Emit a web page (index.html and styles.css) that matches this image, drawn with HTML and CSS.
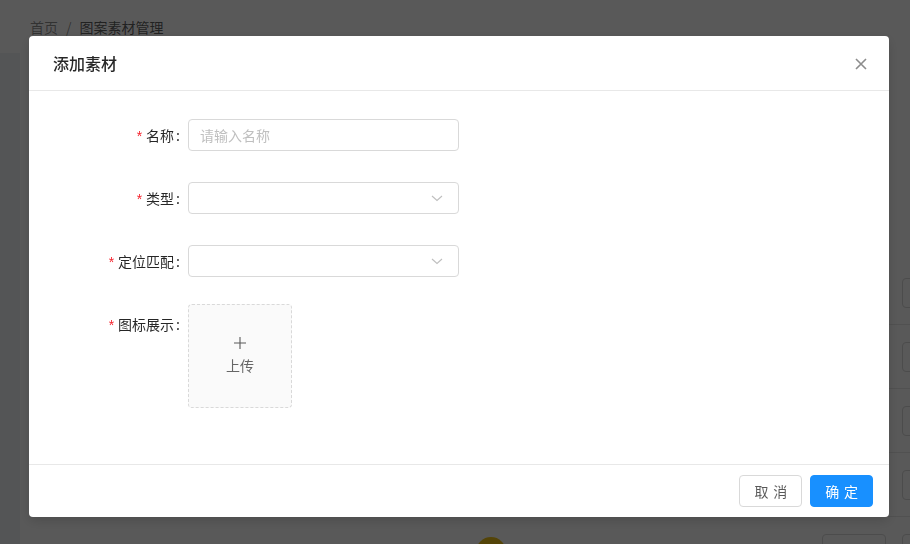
FILE: index.html
```html
<html>
<head>
  <meta charset="utf-8">
  <link rel="stylesheet" href="styles.css">
</head>
<body>
  <div class="page">
    <div class="page-header">
      <span class="crumb">首页</span>
      <span class="crumb-sep">/</span>
      <span class="crumb crumb-last">图案素材管理</span>
    </div>
    <div class="page-content">
      <div class="card">
        <div class="table-row"><span></span><span></span><span></span><span class="actions"><i class="btn-ghost"></i><i class="btn-ghost"></i></span></div>
        <div class="table-row"><span></span><span></span><span></span><span class="actions"><i class="btn-ghost"></i><i class="btn-ghost"></i></span></div>
        <div class="table-row"><span></span><span></span><span></span><span class="actions"><i class="btn-ghost"></i><i class="btn-ghost"></i></span></div>
        <div class="table-row"><span></span><span></span><span></span><span class="actions"><i class="btn-ghost"></i><i class="btn-ghost"></i></span></div>
        <div class="table-row"><span></span><span class="thumb"></span><span></span><span class="actions"><i class="btn-ghost"></i><i class="btn-ghost"></i></span></div>
      </div>
    </div>
  </div>

  <div class="modal-mask"></div>

  <div class="modal">
    <div class="modal-header">
      <div class="modal-title">添加素材</div>
      <button class="modal-close" type="button">
        <svg width="12" height="12" viewBox="0 0 12 12">
          <path d="M1 1 L11 11 M11 1 L1 11" stroke="#8c8c8c" stroke-width="1.6" fill="none"/>
        </svg>
      </button>
    </div>

    <div class="modal-body">
      <form class="form">
        <div class="form-item">
          <label class="form-label"><span class="req">*</span>名称</label>
          <div class="form-control">
            <input class="input" type="text" placeholder="请输入名称">
          </div>
        </div>
        <div class="form-item">
          <label class="form-label"><span class="req">*</span>类型</label>
          <div class="form-control">
            <div class="select">
              <svg class="select-arrow" width="12" height="12" viewBox="0 0 12 12">
                <path d="M1 4 L6 8.5 L11 4" stroke="#bfbfbf" stroke-width="1.1" fill="none"/>
              </svg>
            </div>
          </div>
        </div>
        <div class="form-item">
          <label class="form-label"><span class="req">*</span>定位匹配</label>
          <div class="form-control">
            <div class="select">
              <svg class="select-arrow" width="12" height="12" viewBox="0 0 12 12">
                <path d="M1 4 L6 8.5 L11 4" stroke="#bfbfbf" stroke-width="1.1" fill="none"/>
              </svg>
            </div>
          </div>
        </div>
        <div class="form-item form-item-upload">
          <label class="form-label"><span class="req">*</span>图标展示</label>
          <div class="form-control">
            <div class="upload">
              <svg width="14" height="14" viewBox="0 0 14 14">
                <path d="M7 1 V13 M1 7 H13" stroke="#595959" stroke-width="1.1" fill="none"/>
              </svg>
              <div class="upload-text">上传</div>
            </div>
          </div>
        </div>
      </form>
    </div>

    <div class="modal-footer">
      <button class="btn" type="button"><span>取消</span></button>
      <button class="btn btn-primary" type="button"><span>确定</span></button>
    </div>
  </div>
</body>
</html>
```

FILE: styles.css
```css
html, body {
  height: 100%;
}
body {
  margin: 0;
  padding: 0;
  overflow: hidden;
  font-family: "Noto Sans CJK SC", "Noto Sans", sans-serif;
  font-size: 14px;
  color: rgba(0,0,0,.65);
  background: #f0f2f5;
}

/* page behind the dialog */
.page {
  width: 100%;
  height: 100%;
  overflow: hidden;
}

.page-header {
  height: 53px;
  padding-left: 30px;
  display: flex;
  align-items: center;
  background: #fff;
  box-sizing: border-box;
}

.crumb {
  color: rgba(0,0,0,.45);
}
.crumb-last {
  color: rgba(0,0,0,.65);
}
.crumb-sep {
  margin: 0 8px;
  color: rgba(0,0,0,.45);
}

.page-content {
  padding-left: 20px;
}

.card {
  width: 990px;
  background: #fff;
  padding: 208px 0 0 24px;
}

.table-row {
  display: grid;
  grid-template-columns: 432px 30px 316px auto;
  align-items: center;
  height: 63px;
  border-bottom: 1px solid #e8e8e8;
}

.thumb {
  width: 30px;
  height: 30px;
  border-radius: 50%;
  background: #f0c419;
  margin-top: 6px;
}

.actions {
  display: flex;
  gap: 16px;
}

.btn-ghost {
  display: block;
  width: 64px;
  height: 30px;
  border: 1px solid #d9d9d9;
  border-radius: 4px;
  box-sizing: border-box;
}

/* dialog */
.modal-mask {
  position: fixed;
  top: 0;
  left: 0;
  right: 0;
  bottom: 0;
  background: rgba(0,0,0,.65);
}

.modal {
  position: fixed;
  top: 36px;
  left: 29px;
  width: 860px;
  background: #fff;
  border-radius: 4px;
  box-shadow: 0 4px 12px rgba(0,0,0,.15);
}

.modal-header {
  position: relative;
  padding: 16px 24px;
  border-bottom: 1px solid #e8e8e8;
}

.modal-title {
  font-size: 16px;
  line-height: 22px;
  font-weight: 500;
  color: rgba(0,0,0,.85);
}

.modal-close {
  position: absolute;
  top: 0;
  right: 0;
  width: 56px;
  height: 56px;
  padding: 0;
  border: none;
  background: transparent;
  display: flex;
  align-items: center;
  justify-content: center;
}

.modal-body {
  padding: 24px;
}

.form-item {
  display: grid;
  grid-template-columns: 135px 271px;
  margin-bottom: 23px;
}

.form-item-upload {
  margin-bottom: 32px;
}

.form-label {
  line-height: 40px;
  text-align: right;
  color: rgba(0,0,0,.85);
  white-space: nowrap;
}
.form-label::after {
  content: ":";
  margin: 0 8px 0 2px;
}

.req {
  display: inline-block;
  margin-right: 4px;
  color: #f5222d;
  font-family: "Liberation Sans", sans-serif;
  font-size: 14px;
  line-height: 1;
}

.form-control {
  min-height: 40px;
  display: flex;
  align-items: center;
}

.input,
.select {
  width: 100%;
  height: 32px;
  padding: 4px 11px;
  border: 1px solid #d9d9d9;
  border-radius: 4px;
  box-sizing: border-box;
  font-family: inherit;
  font-size: 14px;
  color: rgba(0,0,0,.65);
  background: #fff;
  outline: none;
}
.input::placeholder {
  color: #bfbfbf;
}

.select {
  position: relative;
}
.select-arrow {
  position: absolute;
  right: 15px;
  top: 9px;
}

.upload {
  width: 104px;
  height: 104px;
  border: 1px dashed #d9d9d9;
  border-radius: 4px;
  background: #fafafa;
  box-sizing: border-box;
  display: flex;
  flex-direction: column;
  align-items: center;
  justify-content: center;
}

.upload-text {
  margin-top: 4px;
  line-height: 22px;
  color: #666;
}

.modal-footer {
  display: flex;
  justify-content: flex-end;
  gap: 8px;
  padding: 10px 16px;
  border-top: 1px solid #e8e8e8;
}

.btn {
  height: 32px;
  padding: 0 14px;
  border: 1px solid #d9d9d9;
  border-radius: 4px;
  background: #fff;
  font-family: inherit;
  font-size: 14px;
  color: rgba(0,0,0,.65);
  white-space: nowrap;
}
.btn span {
  letter-spacing: .34em;
  margin-right: -.34em;
}

.btn-primary {
  border-color: #1890ff;
  background: #1890ff;
  color: #fff;
}
```
